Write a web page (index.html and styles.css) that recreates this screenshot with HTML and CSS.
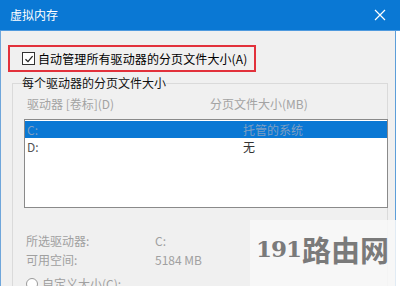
FILE: index.html
```html
<!DOCTYPE html>
<html>
<head>
<meta charset="utf-8">
<link rel="stylesheet" href="styles.css">
</head>
<body>
<div class="window">
  <div class="titlebar">
    <span class="title">虚拟内存</span>
    <svg class="close" width="12" height="12" viewBox="0 0 12 12"><path d="M1 1L11 11M11 1L1 11" stroke="#fff" stroke-width="1.2" fill="none"/></svg>
  </div>
  <div class="content">
    <div class="autobox">
      <span class="checkbox"><svg width="10" height="10" viewBox="0 0 10 10"><path d="M1.5 5.2L4 7.6L8.6 2.2" stroke="#222" stroke-width="1.3" fill="none"/></svg></span>
      <span class="autolabel">自动管理所有驱动器的分页文件大小(A)</span>
    </div>
    <fieldset class="group">
      <legend class="legend">每个驱动器的分页文件大小</legend>
      <div class="headers">
        <span class="col1">驱动器 [卷标](D)</span>
        <span class="col2">分页文件大小(MB)</span>
      </div>
      <div class="listbox">
        <div class="row selected"><span class="col1">C:</span><span class="col2">托管的系统</span></div>
        <div class="row"><span class="col1">D:</span><span class="col2 dark">无</span></div>
      </div>
      <div class="info">
        <div class="inforow"><span class="key">所选驱动器:</span><span class="val">C:</span></div>
        <div class="inforow"><span class="key">可用空间:</span><span class="val">5184 MB</span></div>
      </div>
      <div class="radiorow"><span class="radio"></span><span class="radiolabel">自定义大小(C):</span></div>
    </fieldset>
  </div>
  <div class="watermark"><span class="wm-num">191</span><span class="wm-cjk">路由网</span></div>
</div>
</body>
</html>
```
FILE: styles.css
```css
* { box-sizing: border-box; }
html, body { margin: 0; padding: 0; background: #fff; }
body {
  font-family: "Noto Sans CJK SC", "Noto Sans", sans-serif;
  font-size: 12px;
  color: #000;
}
.window {
  position: relative;
  width: 400px;
  height: 286px;
  overflow: hidden;
  background: #fff;
}
.titlebar {
  height: 31px;
  background: #0a78d4;
  display: flex;
  align-items: center;
  justify-content: space-between;
  padding: 0 10px 0 10px;
  border-bottom: 1px solid #4f9ade;
}
.title { color: #fff; font-size: 12px; line-height: 16px; }
.close { margin-right: 4px; }
.content {
  width: 396px;
  height: 255px;
  background: #f0f0f0;
  border-left: 1px solid #6fa6db;
  border-right: 1px solid #5c9ed9;
  padding-top: 14px;
}
.autobox {
  margin-left: 7px;
  width: 248px;
  height: 27px;
  border: 2px solid #e2313b;
  display: flex;
  align-items: center;
  padding-left: 12px;
  gap: 3px;
}
.checkbox {
  width: 13px;
  height: 13px;
  border: 1px solid #333;
  background: #fff;
  display: flex;
  align-items: center;
  justify-content: center;
}
.autolabel { line-height: 16px; color: #000; letter-spacing: 0.1px; }
.group {
  margin: 3px 7px 0 11px;
  padding: 0;
  border: 1px solid #dadada;
  border-bottom: none;
  min-width: 0;
  height: 240px;
}
.legend {
  margin-left: 9px;
  padding: 0;
  line-height: 16px;
  color: #111;
}
.headers {
  display: flex;
  margin-top: 5px;
  padding-left: 14px;
  line-height: 16px;
  color: #a3a3a3;
}
.headers .col1 { width: 183px; }
.listbox {
  margin: 7px 0 0 11px;
  width: 364px;
  height: 89px;
  background: #fff;
  border: 1px solid #8a8a8a;
  padding-top: 1px;
}
.row {
  display: flex;
  height: 17px;
  line-height: 17px;
  padding-left: 2px;
  color: #555;
}
.row .col1 { width: 216px; }
.row.selected { background: #0a78d4; color: #7f9fc2; }
.row .dark { color: #333; }
.info {
  margin-top: 23px;
  padding-left: 13px;
  color: #a0a0a0;
}
.inforow { display: flex; line-height: 19px; height: 19px; }
.key { width: 129px; }
.radiorow {
  display: flex;
  align-items: center;
  gap: 4px;
  margin-top: 5px;
  padding-left: 13px;
  line-height: 19px;
  color: #a0a0a0;
}
.radio {
  width: 12px;
  height: 12px;
  border: 1px solid #9a9a9a;
  border-radius: 50%;
  background: #fff;
}
.watermark {
  position: absolute;
  left: 250px;
  top: 220px;
  width: 146px;
  height: 66px;
  background: rgba(248, 248, 248, 0.85);
  display: flex;
  align-items: flex-start;
  padding: 12px 0 0 6px;
  color: #7a7a7a;
  font-weight: bold;
}
.wm-num {
  font-family: "DejaVu Serif", serif;
  font-size: 23px;
  line-height: 34px;
  letter-spacing: -1px;
}
.wm-cjk {
  font-family: "Noto Sans CJK SC", sans-serif;
  font-size: 29px;
  line-height: 34px;
  margin-left: 1px;
}
```
